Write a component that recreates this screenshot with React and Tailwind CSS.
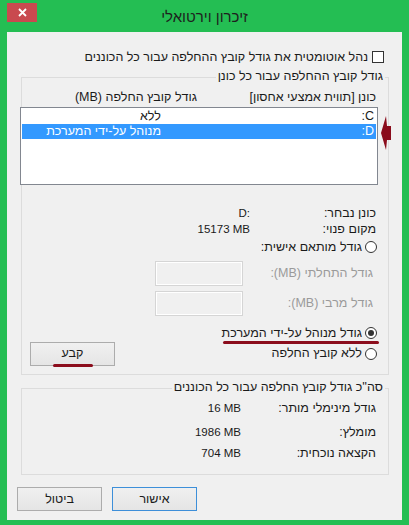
import React from 'react';

function Radio({ checked }) {
  return (
    <span className="w-[12px] h-[12px] shrink-0 rounded-full border border-[#333] bg-white flex items-center justify-center">
      {checked && <span className="w-[6px] h-[6px] rounded-full bg-[#333]" />}
    </span>
  );
}

function Btn({ children, primary, mark }) {
  return (
    <div
      className={`relative h-[24px] w-[85px] flex items-center justify-center border bg-gradient-to-b from-[#f0f0f0] to-[#e5e5e5] ${
        primary ? 'border-[#3d8fd9]' : 'border-[#acacac]'
      }`}
    >
      {children}
      {mark && <span className="absolute left-[22px] bottom-[-2px] w-[40px] h-[3px] rounded-full bg-[#8b0d1c]" />}
    </div>
  );
}

const drives = [
  { d: 'C:', size: 'ללא' },
  { d: 'D:', size: 'מנוהל על-ידי המערכת', selected: true },
];

export default function App() {
  return (
    <div className="w-[409px] h-[525px] bg-[#24be53] flex flex-col font-['Liberation_Sans',_'DejaVu_Sans',_sans-serif] text-[12.5px] text-[#1a1a1a]">
      {/* title bar */}
      <div className="h-[32px] flex items-start px-[7px] shrink-0">
        <div className="mt-[3px] w-[30px] h-[19px] bg-[#c94a4f] flex items-center justify-center">
          <svg width="9" height="9" viewBox="0 0 9 9">
            <path d="M1 1 L8 8 M8 1 L1 8" stroke="#fff" strokeWidth="1.8" />
          </svg>
        </div>
        <div className="flex-1 mt-[7px] text-center text-[15px] leading-[20px] text-[#1e1e1e]" dir="rtl">
          זיכרון וירטואלי
        </div>
        <div className="w-[30px]" />
      </div>

      {/* client */}
      <div dir="rtl" className="mx-[7px] h-[488px] bg-[#f0f0f0] flex flex-col">
        <div className="mt-[19px] mr-[18px] h-[12px] flex items-center gap-[4px]">
          <span className="w-[12px] h-[12px] shrink-0 border border-[#333] bg-white" />
          <span className="leading-[14px]">נהל אוטומטית את גודל קובץ ההחלפה עבור כל הכוננים</span>
        </div>

        {/* group 1 */}
        <div className="relative mt-[14px] ml-[14px] mr-[13px] h-[298px] border border-[#dcdcdc] flex flex-col">
          <span className="self-start -mt-[9px] mr-[3px] px-[2px] leading-[14px] bg-[#f0f0f0]">
            גודל קובץ ההחלפה עבור כל כונן
          </span>
          <div className="mt-[7px] mr-[12px] flex leading-[14px]">
            <span className="w-[179px]">כונן [תווית אמצעי אחסון]</span>
            <span>גודל קובץ החלפה (MB)</span>
          </div>

          <div className="mt-[3px] mr-[10px] -ml-[2px] h-[78px] border border-[#828790] bg-white p-[1px] flex flex-col">
            {drives.map((r) => (
              <div
                key={r.d}
                className={`h-[15px] flex items-center pr-[2px] leading-[15px] ${r.selected ? 'bg-[#3399ff] text-white' : ''}`}
              >
                <span className="w-[213px]">{r.d}</span>
                <span>{r.size}</span>
              </div>
            ))}
          </div>

          <div className="mt-[20px] mr-[12px] flex leading-[16px]">
            <span className="w-[126px]">כונן נבחר:</span>
            <span dir="ltr" className="text-[11.5px]">D:</span>
          </div>
          <div className="mr-[12px] flex leading-[16px]">
            <span className="w-[126px]">מקום פנוי:</span>
            <span dir="ltr" className="text-[11.5px]">15173 MB</span>
          </div>

          <div className="mt-[2px] mr-[11px] h-[16px] flex items-center gap-[3px]">
            <Radio />
            <span>גודל מותאם אישית:</span>
          </div>

          <div className="mt-[6px] mr-[15px] h-[25px] flex items-center">
            <span className="w-[130px] text-[#9a9a9a]">גודל התחלתי (MB):</span>
            <div className="w-[88px] h-[25px] border border-[#d5d5d5] shadow-[inset_0_0_0_1px_#ffffff]" />
          </div>
          <div className="mt-[5px] mr-[15px] h-[25px] flex items-center">
            <span className="w-[130px] text-[#9a9a9a]">גודל מרבי (MB):</span>
            <div className="w-[88px] h-[25px] border border-[#d5d5d5] shadow-[inset_0_0_0_1px_#ffffff]" />
          </div>

          <div className="mt-[9px] mr-[11px] h-[16px] flex items-center gap-[3px]">
            <Radio checked />
            <span>גודל מנוהל על-ידי המערכת</span>
          </div>
          <div className="mr-[9px] w-[156px] h-[3px] rounded-full bg-[#8b0d1c]" />
          <div className="-mt-[2px] mr-[11px] ml-[8px] h-[23px] flex items-center justify-between">
            <div className="flex items-center gap-[3px]">
              <Radio />
              <span>ללא קובץ החלפה</span>
            </div>
            <Btn mark>קבע</Btn>
          </div>

          {/* annotation arrow */}
          <svg className="absolute left-[359px] top-[38px]" width="11" height="34" viewBox="0 0 11 34">
            <path d="M0 17 L5 0 L6 10 L10 10 L10 24 L6 24 L5 34 Z" fill="#8a0c1c" />
          </svg>
        </div>

        {/* group 2 */}
        <div className="mt-[13px] ml-[14px] mr-[13px] h-[87px] border border-[#dcdcdc] flex flex-col">
          <span className="self-start -mt-[9px] mr-[3px] px-[2px] leading-[14px] bg-[#f0f0f0]">
            סה''כ גודל קובץ החלפה עבור כל הכוננים
          </span>
          <div className="mt-[6px] mr-[12px] flex leading-[16px]">
            <span className="w-[135px]">גודל מינימלי מותר:</span>
            <span dir="ltr" className="text-[11.5px]">16 MB</span>
          </div>
          <div className="mt-[8px] mr-[12px] flex leading-[16px]">
            <span className="w-[135px]">מומלץ:</span>
            <span dir="ltr" className="text-[11.5px]">1986 MB</span>
          </div>
          <div className="mt-[5px] mr-[12px] flex leading-[16px]">
            <span className="w-[135px]">הקצאה נוכחית:</span>
            <span dir="ltr" className="text-[11.5px]">704 MB</span>
          </div>
        </div>

        <div className="mt-[12px] pl-[10px] flex justify-end gap-[10px]">
          <Btn primary>אישור</Btn>
          <Btn>ביטול</Btn>
        </div>
      </div>
    </div>
  );
}
